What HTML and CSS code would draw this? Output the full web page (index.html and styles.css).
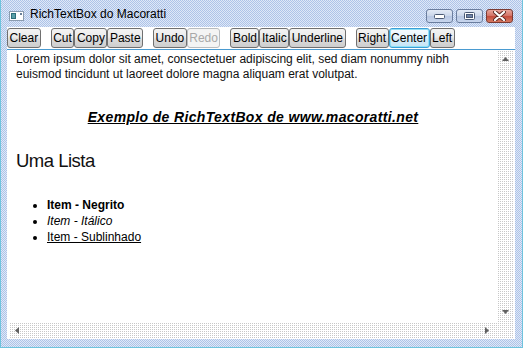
FILE: index.html
```html
<!DOCTYPE html>
<html lang="pt">
<head>
<meta charset="utf-8">
<title>RichTextBox do Macoratti</title>
<link rel="stylesheet" href="styles.css">
</head>
<body>
<div class="window">
  <div class="titlebar">
    <svg class="app-icon" width="15" height="10" viewBox="0 0 15 10">
      <rect x="0.5" y="0.5" width="14" height="9" fill="#ffffff" stroke="#8a9bb0"/>
      <rect x="2" y="2" width="5" height="6" fill="#2f6f7a"/>
      <rect x="3" y="3" width="3" height="4" fill="#5aa0a8"/>
      <rect x="11" y="2" width="2" height="2" fill="#6a7f98"/>
    </svg>
    <span class="title">RichTextBox do Macoratti</span>
    <div class="controls">
      <span class="ctl ctl-min"><svg width="11" height="5" viewBox="0 0 11 5"><rect x="0.5" y="0.5" width="10" height="4" rx="1" fill="#ffffff" stroke="#4b5a75"/></svg></span>
      <span class="ctl ctl-max"><svg width="11" height="8" viewBox="0 0 11 8"><rect x="0.5" y="0.5" width="10" height="7" rx="1" fill="#ffffff" stroke="#4b5a75"/><rect x="2.5" y="2.5" width="6" height="3" fill="#6f84a8" stroke="#4b5a75"/></svg></span>
      <span class="ctl ctl-close"><svg width="13" height="10" viewBox="0 0 13 10"><path d="M2 1 L11 9 M11 1 L2 9" stroke="#5b2a24" stroke-width="4" stroke-linecap="round"/><path d="M2 1 L11 9 M11 1 L2 9" stroke="#ffffff" stroke-width="2.2" stroke-linecap="round"/></svg></span>
    </div>
  </div>

  <div class="toolbar">
    <div class="group">
      <button class="btn">Clear</button>
    </div>
    <div class="group">
      <button class="btn">Cut</button><button class="btn">Copy</button><button class="btn">Paste</button>
    </div>
    <div class="group">
      <button class="btn">Undo</button><button class="btn btn-disabled" disabled>Redo</button>
    </div>
    <div class="group">
      <button class="btn">Bold</button><button class="btn">Italic</button><button class="btn">Underline</button>
    </div>
    <div class="group">
      <button class="btn">Right</button><button class="btn btn-focus">Center</button><button class="btn">Left</button>
    </div>
  </div>

  <div class="editor">
    <div class="doc">
      <p class="lorem">Lorem ipsum dolor sit amet, consectetuer adipiscing elit, sed diam nonummy nibh euismod tincidunt ut laoreet dolore magna aliquam erat volutpat.</p>
      <p class="heading">Exemplo de RichTextBox de www.macoratti.net</p>
      <h2 class="list-title">Uma Lista</h2>
      <ul class="items">
        <li><b>Item - Negrito</b></li>
        <li><i>Item - Itálico</i></li>
        <li><u>Item - Sublinhado</u></li>
      </ul>
    </div>
    <div class="vscroll">
      <svg width="7" height="4" viewBox="0 0 7 4"><path d="M0 4 L3.5 0 L7 4 Z" fill="#606060"/></svg>
      <svg width="7" height="4" viewBox="0 0 7 4"><path d="M0 0 L7 0 L3.5 4 Z" fill="#606060"/></svg>
    </div>
    <div class="hscroll">
      <svg width="4" height="7" viewBox="0 0 4 7"><path d="M4 0 L4 7 L0 3.5 Z" fill="#606060"/></svg>
      <svg width="4" height="7" viewBox="0 0 4 7"><path d="M0 0 L0 7 L4 3.5 Z" fill="#606060"/></svg>
    </div>
    <div class="corner"></div>
  </div>
</div>
</body>
</html>
```

FILE: styles.css
```css
html, body {
  margin: 0;
  padding: 0;
}

body {
  width: 523px;
  height: 348px;
  overflow: hidden;
  font-family: "Liberation Sans", Arial, sans-serif;
  font-size: 12px;
  color: #000;
}

.window {
  width: 523px;
  height: 348px;
  box-sizing: border-box;
  display: flex;
  flex-direction: column;
  border: 1px solid #6fc3dd;
  border-top: 0;
  background: repeating-conic-gradient(#adc3e8 0 25%, #dfe8f7 0 50%) 0 0 / 2px 2px;
}

/* title bar */
.titlebar {
  height: 27px;
  display: flex;
  align-items: flex-start;
  flex-shrink: 0;
}

.app-icon {
  margin: 11px 0 0 8px;
  display: block;
}

.title {
  margin-left: 6px;
  padding-top: 6px;
  line-height: 16px;
  font-size: 12px;
  color: #000;
}

.controls {
  margin: 9px 9px 0 auto;
  display: flex;
  gap: 3px;
}

.ctl {
  width: 27px;
  height: 14px;
  box-sizing: border-box;
  border: 1px solid #6a7d9e;
  border-radius: 3px;
  display: flex;
  align-items: center;
  justify-content: center;
  background: linear-gradient(#e3eaf6, #c9d5ea 50%, #b7c6e2 50%, #c8d6ee);
}

.ctl svg {
  display: block;
}

.ctl-close {
  border-color: #7a3a33;
  background: linear-gradient(#e8a59b, #d27063 50%, #c2493a 50%, #d67a62);
}

/* toolbar */
.toolbar {
  height: 22px;
  margin: 0 7px 0 6px;
  background: #fff;
  display: flex;
  align-items: flex-start;
  padding-top: 1px;
  box-sizing: border-box;
  flex-shrink: 0;
}

.group {
  display: flex;
}

.group + .group {
  margin-left: 10px;
}

.btn {
  height: 20px;
  box-sizing: border-box;
  margin: 0;
  padding: 0 1.5px;
  border: 1px solid #707070;
  border-radius: 3px;
  font-family: "Liberation Sans", Arial, sans-serif;
  font-size: 12px;
  line-height: 18px;
  color: #000;
  background: linear-gradient(#f3f3f3, #ebebeb 45%, #dcdcdc 55%, #cdcdcd);
}

.btn-disabled {
  color: #a8a8a8;
  border-color: #b9bcbf;
  background: #f4f4f4;
}

.btn-focus {
  border-color: #3c9fd6;
  box-shadow: inset 0 0 0 1px #8fe0f6;
  background: linear-gradient(#f6fbfe, #e8f5fc 45%, #d4ecf8 55%, #c6e4f5);
}

/* editor */
.editor {
  flex: 1;
  margin: 0 7px 8px 6px;
  background: #fff;
  border-top: 1px solid #4a9bd1;
  padding: 0 2px 1px 2px;
  display: grid;
  grid-template-columns: 1fr 16px;
  grid-template-rows: 1fr 16px;
  min-height: 0;
}

.doc {
  padding: 2px 7px 0 7px;
  overflow: hidden;
}

.lorem {
  margin: 0;
  font-size: 12px;
  line-height: 15px;
  color: #111;
}

.heading {
  margin: 26px 0 0;
  text-align: center;
  font-size: 14px;
  line-height: 18px;
  font-weight: bold;
  font-style: italic;
  text-decoration: underline;
  letter-spacing: 0.35px;
}

.list-title {
  margin: 23px 0 0;
  font-size: 18.5px;
  line-height: 24px;
  font-weight: normal;
  letter-spacing: -0.5px;
  color: #111;
}

.items {
  margin: 24px 0 0;
  padding-left: 31px;
  font-size: 12px;
  line-height: 16px;
}

.vscroll,
.hscroll,
.corner {
  background:
    linear-gradient(90deg, #fff 1px, transparent 1px) 0 0 / 2px 2px,
    linear-gradient(#fff 1px, #c8c8c8 1px) 0 0 / 2px 2px;
}

.vscroll {
  display: flex;
  flex-direction: column;
  align-items: center;
  justify-content: space-between;
  padding: 7px 0 8px;
}

.hscroll {
  display: flex;
  align-items: center;
  justify-content: space-between;
  padding: 0 8px 0 6px;
}

.vscroll svg,
.hscroll svg {
  display: block;
}
```
